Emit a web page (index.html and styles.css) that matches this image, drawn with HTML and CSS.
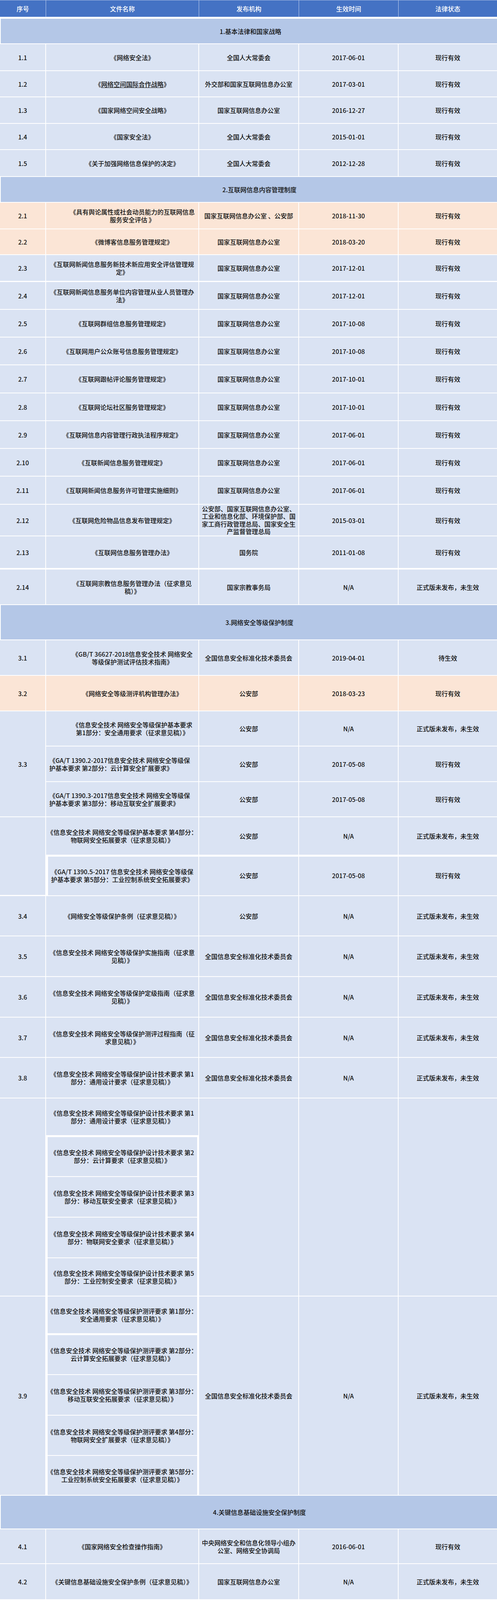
FILE: index.html
```html
<!DOCTYPE html>
<html lang="zh-CN">
<head>
<meta charset="utf-8">
<title>网络安全法律法规一览</title>
<link rel="stylesheet" href="styles.css">
</head>
<body>
<div class="sheet">
  <div class="row head"><div class="c">序号</div><div class="c">文件名称</div><div class="c">发布机构</div><div class="c">生效时间</div><div class="c st">法律状态</div></div>

  <div class="row sec"><div class="c sec1">1.基本法律和国家战略</div></div>
  <div class="row"><div class="c">1.1</div><div class="c nm sh">《网络安全法》</div><div class="c">全国人大常委会</div><div class="c">2017-06-01</div><div class="c st">现行有效</div></div>
  <div class="row"><div class="c">1.2</div><div class="c nm sh"><span>《<span class="link">网络空间国际合作战略</span>》</span></div><div class="c">外交部和国家互联网信息办公室</div><div class="c">2017-03-01</div><div class="c st">现行有效</div></div>
  <div class="row"><div class="c">1.3</div><div class="c nm sh">《国家网络空间安全战略》</div><div class="c">国家互联网信息办公室</div><div class="c">2016-12-27</div><div class="c st">现行有效</div></div>
  <div class="row"><div class="c">1.4</div><div class="c nm sh">《国家安全法》</div><div class="c">全国人大常委会</div><div class="c">2015-01-01</div><div class="c st">现行有效</div></div>
  <div class="row"><div class="c">1.5</div><div class="c nm sh">《关于加强网络信息保护的决定》</div><div class="c">全国人大常委会</div><div class="c">2012-12-28</div><div class="c st">现行有效</div></div>

  <div class="row sec"><div class="c secn">2.互联网信息内容管理制度</div></div>
  <div class="row peach"><div class="c">2.1</div><div class="c nm sh"><span>《具有舆论属性或社会动员能力的互联网信息<br>服务安全评估 》</span></div><div class="c">国家互联网信息办公室 、公安部</div><div class="c">2018-11-30</div><div class="c st">现行有效</div></div>
  <div class="row peach"><div class="c">2.2</div><div class="c nm sh">《微博客信息服务管理规定》</div><div class="c">国家互联网信息办公室</div><div class="c">2018-03-20</div><div class="c st">现行有效</div></div>
  <div class="row bb3"><div class="c">2.3</div><div class="c nm"><span>《互联网新闻信息服务新技术新应用安全评估管理规<br>定》</span></div><div class="c">国家互联网信息办公室</div><div class="c">2017-12-01</div><div class="c st">现行有效</div></div>
  <div class="row"><div class="c">2.4</div><div class="c nm"><span>《互联网新闻信息服务单位内容管理从业人员管理办<br>法》</span></div><div class="c">国家互联网信息办公室</div><div class="c">2017-12-01</div><div class="c st">现行有效</div></div>
  <div class="row"><div class="c">2.5</div><div class="c nm">《互联网群组信息服务管理规定》</div><div class="c">国家互联网信息办公室</div><div class="c">2017-10-08</div><div class="c st">现行有效</div></div>
  <div class="row"><div class="c">2.6</div><div class="c nm">《互联网用户公众账号信息服务管理规定》</div><div class="c">国家互联网信息办公室</div><div class="c">2017-10-08</div><div class="c st">现行有效</div></div>
  <div class="row"><div class="c">2.7</div><div class="c nm">《互联网跟帖评论服务管理规定》</div><div class="c">国家互联网信息办公室</div><div class="c">2017-10-01</div><div class="c st">现行有效</div></div>
  <div class="row"><div class="c">2.8</div><div class="c nm">《互联网论坛社区服务管理规定》</div><div class="c">国家互联网信息办公室</div><div class="c">2017-10-01</div><div class="c st">现行有效</div></div>
  <div class="row"><div class="c">2.9</div><div class="c nm">《互联网信息内容管理行政执法程序规定》</div><div class="c">国家互联网信息办公室</div><div class="c">2017-06-01</div><div class="c st">现行有效</div></div>
  <div class="row"><div class="c">2.10</div><div class="c nm">《互联新闻信息服务管理规定》</div><div class="c">国家互联网信息办公室</div><div class="c">2017-06-01</div><div class="c st">现行有效</div></div>
  <div class="row"><div class="c">2.11</div><div class="c nm">《互联网新闻信息服务许可管理实施细则》</div><div class="c">国家互联网信息办公室</div><div class="c">2017-06-01</div><div class="c st">现行有效</div></div>
  <div class="row"><div class="c">2.12</div><div class="c nm">《互联网危险物品信息发布管理规定》</div><div class="c tight"><span>公安部、国家互联网信息办公室、<br>工业和信息化部、环境保护部、国<br>家工商行政管理总局、国家安全生<br>产监督管理总局</span></div><div class="c">2015-03-01</div><div class="c st">现行有效</div></div>
  <div class="row bb4"><div class="c">2.13</div><div class="c nm sh">《互联网信息服务管理办法》</div><div class="c">国务院</div><div class="c">2011-01-08</div><div class="c st">现行有效</div></div>
  <div class="row"><div class="c">2.14</div><div class="c nm sh"><span>《互联网宗教信息服务管理办法（征求意见<br>稿）》</span></div><div class="c">国家宗教事务局</div><div class="c">N/A</div><div class="c st">正式版未发布，未生效</div></div>

  <div class="row sec"><div class="c secn">3.网络安全等级保护制度</div></div>
  <div class="row"><div class="c">3.1</div><div class="c nm sh"><span>《GB/T 36627-2018信息安全技术 网络安全<br>等级保护测试评估技术指南》</span></div><div class="c">全国信息安全标准化技术委员会</div><div class="c">2019-04-01</div><div class="c st">待生效</div></div>
  <div class="row peach"><div class="c">3.2</div><div class="c nm sh">《网络安全等级测评机构管理办法》</div><div class="c">公安部</div><div class="c">2018-03-23</div><div class="c st">现行有效</div></div>
  <div class="row"><div class="c span3">3.3</div><div class="c nm sh"><span>《信息安全技术 网络安全等级保护基本要求<br>第1部分：安全通用要求（征求意见稿）》</span></div><div class="c">公安部</div><div class="c">N/A</div><div class="c st">正式版未发布，未生效</div></div>
  <div class="row"><div class="c nm lf"><span>《GA/T 1390.2-2017信息安全技术 网络安全等级保<br>护基本要求 第2部分：云计算安全扩展要求》</span></div><div class="c">公安部</div><div class="c">2017-05-08</div><div class="c st">现行有效</div></div>
  <div class="row"><div class="c nm lf"><span>《GA/T 1390.3-2017信息安全技术 网络安全等级保<br>护基本要求 第3部分：移动互联安全扩展要求》</span></div><div class="c">公安部</div><div class="c">2017-05-08</div><div class="c st">现行有效</div></div>
  <div class="row"><div class="c span2 seq-empty"></div><div class="c nm"><span>《信息安全技术 网络安全等级保护基本要求 第4部分：<br>物联网安全拓展要求（征求意见稿）》</span></div><div class="c">公安部</div><div class="c">N/A</div><div class="c st">正式版未发布，未生效</div></div>
  <div class="row top-thick"><div class="c nm edge-l"><span>《GA/T 1390.5-2017 信息安全技术 网络安全等级保<br>护基本要求 第5部分：工业控制系统安全拓展要求》</span></div><div class="c">公安部</div><div class="c">2017-05-08</div><div class="c st">现行有效</div></div>
  <div class="row"><div class="c">3.4</div><div class="c nm">《网络安全等级保护条例（征求意见稿）》</div><div class="c">公安部</div><div class="c">N/A</div><div class="c st">正式版未发布，未生效</div></div>
  <div class="row"><div class="c">3.5</div><div class="c nm"><span>《信息安全技术 网络安全等级保护实施指南（征求意<br>见稿）》</span></div><div class="c">全国信息安全标准化技术委员会</div><div class="c">N/A</div><div class="c st">正式版未发布，未生效</div></div>
  <div class="row"><div class="c">3.6</div><div class="c nm"><span>《信息安全技术 网络安全等级保护定级指南（征求意<br>见稿）》</span></div><div class="c">全国信息安全标准化技术委员会</div><div class="c">N/A</div><div class="c st">正式版未发布，未生效</div></div>
  <div class="row"><div class="c">3.7</div><div class="c nm"><span>《信息安全技术 网络安全等级保护测评过程指南（征<br>求意见稿）》</span></div><div class="c">全国信息安全标准化技术委员会</div><div class="c">N/A</div><div class="c st">正式版未发布，未生效</div></div>
  <div class="row"><div class="c">3.8</div><div class="c nm"><span>《信息安全技术 网络安全等级保护设计技术要求 第1<br>部分：通用设计要求（征求意见稿）》</span></div><div class="c">全国信息安全标准化技术委员会</div><div class="c">N/A</div><div class="c st">正式版未发布，未生效</div></div>

  <div class="row"><div class="c span5"></div><div class="c nm"><span>《信息安全技术 网络安全等级保护设计技术要求 第1<br>部分：通用设计要求（征求意见稿）》</span></div><div class="c span5"></div><div class="c span5"></div><div class="c st span5"></div></div>
  <div class="row"><div class="c nm boxed boxed-top"><span>《信息安全技术 网络安全等级保护设计技术要求 第2<br>部分：云计算要求（征求意见稿）》</span></div></div>
  <div class="row"><div class="c nm boxed"><span>《信息安全技术 网络安全等级保护设计技术要求 第3<br>部分：移动互联安全要求（征求意见稿）》</span></div></div>
  <div class="row"><div class="c nm boxed"><span>《信息安全技术 网络安全等级保护设计技术要求 第4<br>部分：物联网安全要求（征求意见稿）》</span></div></div>
  <div class="row"><div class="c nm boxed"><span>《信息安全技术 网络安全等级保护设计技术要求 第5<br>部分：工业控制安全要求（征求意见稿）》</span></div></div>

  <div class="row"><div class="c span5">3.9</div><div class="c nm boxed"><span>《信息安全技术 网络安全等级保护测评要求 第1部分：<br>安全通用要求（征求意见稿）》</span></div><div class="c span5">全国信息安全标准化技术委员会</div><div class="c span5">N/A</div><div class="c st span5">正式版未发布，未生效</div></div>
  <div class="row"><div class="c nm boxed boxed-top"><span>《信息安全技术 网络安全等级保护测评要求 第2部分：<br>云计算安全拓展要求（征求意见稿）》</span></div></div>
  <div class="row"><div class="c nm boxed"><span>《信息安全技术 网络安全等级保护测评要求 第3部分：<br>移动互联安全拓展要求（征求意见稿）》</span></div></div>
  <div class="row"><div class="c nm boxed"><span>《信息安全技术 网络安全等级保护测评要求 第4部分：<br>物联网安全扩展要求（征求意见稿）》</span></div></div>
  <div class="row"><div class="c nm boxed"><span>《信息安全技术 网络安全等级保护测评要求 第5部分：<br>工业控制系统安全拓展要求（征求意见稿）》</span></div></div>

  <div class="row sec"><div class="c secn">4.关键信息基础设施安全保护制度</div></div>
  <div class="row"><div class="c">4.1</div><div class="c nm">《国家网络安全检查操作指南》</div><div class="c"><span>中央网络安全和信息化领导小组办<br>公室、网络安全协调局</span></div><div class="c">2016-06-01</div><div class="c st">现行有效</div></div>
  <div class="row"><div class="c">4.2</div><div class="c nm">《关键信息基础设施安全保护条例（征求意见稿）》</div><div class="c">国家互联网信息办公室</div><div class="c">N/A</div><div class="c st">正式版未发布，未生效</div></div>
  <div class="row"><div class="c">4.3</div><div class="c nm"><span>《信息安全技术 关键信息基础设施安全检查评估指南<br>（征求意见稿）》</span></div><div class="c">全国信息安全标准化技术委员会</div><div class="c">N/A</div><div class="c st">正式版未发布，未生效</div></div>
  <div class="row"><div class="c">4.4</div><div class="c nm"><span>《信息安全技术 关键信息基础设施安全保障评价指标<br>体系（征求意见稿）》</span></div><div class="c">全国信息安全标准化技术委员会</div><div class="c">N/A</div><div class="c st">正式版未发布，未生效</div></div>
  <div class="row"><div class="c">4.5</div><div class="c nm"><span>《信息安全技术 关键信息基础设施网络安全保护要求<br>（征求意见稿）》</span></div><div class="c">全国信息安全标准化技术委员会</div><div class="c">N/A</div><div class="c st">正式版未发布，未生效</div></div>
  <div class="row last"><div class="c">4.6</div><div class="c nm"><span>《信息安全技术 关键信息基础设施安全控制措施（征<br>求意见稿）》</span></div><div class="c">全国信息安全标准化技术委员会</div><div class="c">N/A</div><div class="c st">正式版未发布，未生效</div></div>
</div>
</body>
</html>
```

FILE: styles.css
```css
html, body {
  margin: 0;
  padding: 0;
  background: #ffffff;
}

body {
  font-family: "Noto Sans CJK SC", "Noto Sans", sans-serif;
  font-size: 16px;
  font-weight: 500;
  color: #111111;
}

.sheet {
  display: grid;
  width: 1273px;
  grid-template-columns: 118px 392px 256px 255px 252px;
  grid-template-rows:
    48px
    65px 69px 67px 68px 67px 69px
    66px 68px 66px 69px 71px 71px 71px 72px 71px 71px 71px 72px 81px 85px 91px
    90px 91px 91px
    90px 91px 90px 98px 104px
    103px 104px 104px 103px 104px
    96px 105px 104px 104px 98px
    96px 105px 104px 103px 102px
    86px 89px 92px 90px 90px 90px 89px;
  overflow: hidden;
}

.row { display: contents; }

.c {
  box-sizing: border-box;
  min-width: 0;
  min-height: 0;
  overflow: visible;
  display: flex;
  align-items: center;
  justify-content: center;
  text-align: center;
  line-height: 20px;
  white-space: nowrap;
  padding: 0 6px;
  background: #dae3f3;
  border-right: 2px solid #ffffff;
  border-bottom: 2px solid #ffffff;
}

.c.st { border-right: 0; }
.last > .c { border-bottom: 0; }

/* header */
.head > .c {
  background: #4472c4;
  color: #ffffff;
  border-top: 1px solid #a9bde3;
  border-right: 1px solid #c3d2ee;
  border-bottom: 5px solid #ffffff;
  padding: 0;
}
.head > .c.st { border-right: 0; }

/* section bands */
.sec > .c {
  grid-column: 1 / -1;
  background: #b4c7e7;
  border-right: 0;
  box-shadow: inset 2px 0 0 #ffffff;
}
.sec > .c.sec1 { padding: 0 0 0 10px; }
.sec > .c.secn { padding: 0 0 0 56px; }

/* highlighted rows */
.peach > .c { background: #fbe5d6; }

/* thicker separators */
.bb3 > .c { border-bottom-width: 3px; }
.bb4 > .c { border-bottom-width: 4px; }

/* name column variants */
.c.nm { padding: 0 4px; }
.c.nm.sh { padding: 0 4px 0 56px; }
.c.nm.lf { padding: 0 4px 0 8px; justify-content: flex-start; text-align: left; }

.c.tight { line-height: 19.5px; }

.link { text-decoration: underline; text-underline-offset: 2px; }

/* spans */
.span2 { grid-row: span 2; }
.span3 { grid-row: span 3; }
.span5 { grid-row: span 5; }

.c.seq-empty { border-bottom-width: 3px; }
.top-thick > .c { box-shadow: inset 0 3px 0 #ffffff; }
.top-thick > .c.edge-l { box-shadow: inset 5px 3px 0 #ffffff; }

.c.boxed { box-shadow: inset 4px 0 0 #ffffff, inset -3px 0 0 #ffffff; }
.c.boxed.boxed-top { box-shadow: inset 4px 0 0 #ffffff, inset -3px 0 0 #ffffff, inset 0 3px 0 #ffffff; }
```
